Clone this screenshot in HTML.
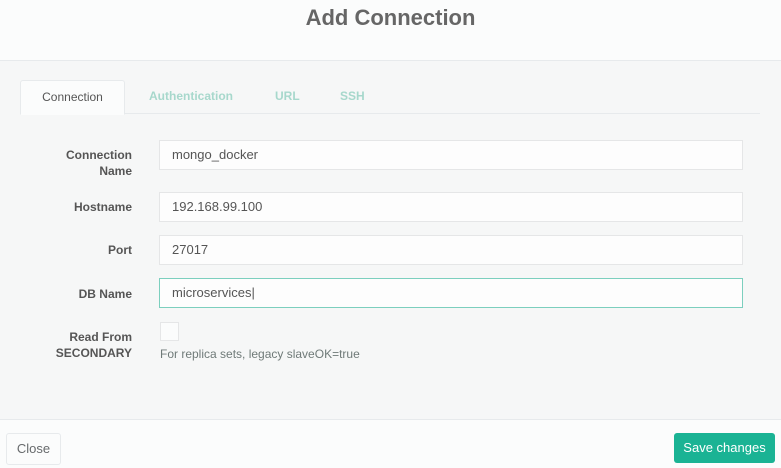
<!DOCTYPE html>
<html><head><style>
body{margin:0;width:781px;height:467px;position:relative;font-family:"Liberation Sans",sans-serif;background:#f6f7f7;overflow:hidden;color:#676a6c}
.hdr{position:absolute;left:0;top:0;width:781px;height:60px;background:#fbfcfc;border-bottom:1px solid #e7eaec}
.hdr h1{margin:0;text-align:center;font-size:22px;font-weight:bold;color:#666;line-height:36px}
.ftr{position:absolute;left:0;top:419px;width:781px;height:48px;background:#fbfcfc;border-top:1px solid #e7eaec}
.tabline{position:absolute;left:20px;top:113px;width:740px;border-top:1px solid #e7eaec}
.tab{position:absolute;top:80px;height:33px;line-height:33px;font-size:12px;font-weight:bold;color:#a7d8cc}
.act{left:20px;width:103px;background:#fbfcfc;border:1px solid #e7eaec;border-bottom:1px solid #fbfcfc;border-radius:3px 3px 0 0;text-align:center;color:#555;font-weight:normal;height:33px}
.lbl{position:absolute;right:649px;font-size:12px;font-weight:bold;color:#555;text-align:right;line-height:16px}
.in{position:absolute;left:159px;height:28px;border:1px solid #e5e6e7;background:#fdfdfd;font-size:13px;line-height:28px;padding-left:12px;color:#555;width:570px}
.btn{position:absolute;top:433px;height:30px;line-height:30px;font-size:13px;border-radius:3px;text-align:center}
</style></head><body>
<div class="hdr"><h1>Add Connection</h1></div>
<div class="tabline"></div>
<div class="tab act">Connection</div>
<div class="tab" style="left:149px">Authentication</div>
<div class="tab" style="left:275px">URL</div>
<div class="tab" style="left:340px">SSH</div>
<div class="lbl" style="top:147px">Connection<br>Name</div>
<div class="in" style="top:140px">mongo_docker</div>
<div class="lbl" style="top:199px">Hostname</div>
<div class="in" style="top:192px">192.168.99.100</div>
<div class="lbl" style="top:242px">Port</div>
<div class="in" style="top:235px">27017</div>
<div class="lbl" style="top:286px">DB Name</div>
<div class="in" style="top:278px;border-color:#7ccfbe">microservices|</div>
<div class="lbl" style="top:329px">Read From<br>SECONDARY</div>
<div style="position:absolute;left:160px;top:322px;width:17px;height:17px;border:1px solid #e5e6e7;background:#fbfcfc"></div>
<div style="position:absolute;left:160px;top:347px;font-size:12px;color:#6f7a78">For replica sets, legacy slaveOK=true</div>
<div class="ftr"></div>
<div class="btn" style="left:6px;width:53px;border:1px solid #e7eaec;background:#fbfcfc;color:#676a6c">Close</div>
<div class="btn" style="left:674px;width:101px;background:#1ab394;color:#fff">Save changes</div>
</body></html>
